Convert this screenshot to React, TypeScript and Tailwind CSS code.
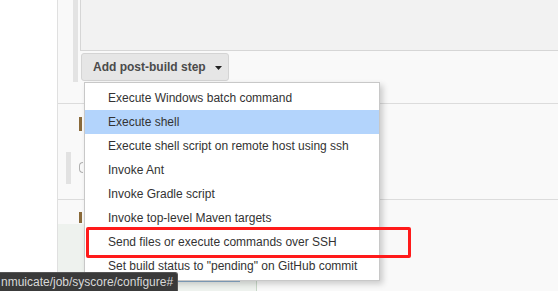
const steps = [
  "Execute Windows batch command",
  "Execute shell",
  "Execute shell script on remote host using ssh",
  "Invoke Ant",
  "Invoke Gradle script",
  "Invoke top-level Maven targets",
  "Send files or execute commands over SSH",
  'Set build status to "pending" on GitHub commit',
];

function StepMenu() {
  return (
    <div className="absolute left-[84px] top-[82px] w-[296px] border border-[#c8c8c8] bg-white pt-[3px] pb-[2px] shadow-[3px_3px_6px_rgba(0,0,0,0.18)]">
      {steps.map((s, i) => (
        <div
          key={s}
          className={
            "flex h-[24px] items-center whitespace-nowrap pl-[23px] text-[12px] text-[#333] " +
            (i === 1 ? "bg-[#b3d4fc]" : "")
          }
        >
          {s}
        </div>
      ))}
    </div>
  );
}

export default function App() {
  return (
    <div className="relative h-[291px] w-[558px] overflow-hidden bg-white font-['Liberation_Sans',Arial,sans-serif]">
      <div className="flex h-full">
        <div className="w-[58px] shrink-0 border-r border-[#e0e0e0] bg-white" />
        <div className="flex flex-1 flex-col bg-[#f9f9f9]">
          {/* post-build section */}
          <div className="flex h-[104px] border-b border-[#dcdcdc] pl-[15px]">
            <div className="h-[82px] w-[5px] bg-[#e3e3e3]" />
            <div className="ml-[2px] flex flex-1 flex-col">
              <div className="h-[51px] border-b border-l border-[#d6d6d6] bg-[#f2f2f2]" />
              <button className="mt-[2px] ml-[1px] flex h-[28px] w-[148px] items-center gap-[9px] whitespace-nowrap rounded-[3px] border border-[#d4d4d4] bg-[#e6e6e6] pl-[11px] text-[12px] font-bold text-[#4b4b4b]">
                Add post-build step
                <svg width="7" height="4" viewBox="0 0 7 4" className="mt-[1px]">
                  <path d="M0 0h7L3.5 4z" fill="#222" />
                </svg>
              </button>
            </div>
          </div>

          {/* build section behind menu */}
          <div className="relative h-[96px] border-b border-[#dcdcdc]">
            <div className="absolute left-[21px] top-[13px] h-[14px] w-[3px] bg-[#8a6a3a]" />
            <div className="absolute left-[8px] top-[48px] h-[32px] w-[5px] bg-[#e2e2e2]" />
            <div className="absolute left-[21px] top-[58px] h-[11px] w-[4px] rounded-l-full border border-r-0 border-[#b0b0b0]" />
          </div>

          <div className="relative flex-1">
            <div className="absolute left-[21px] top-[12px] h-[11px] w-[3px] bg-[#8a6a3a]" />
            <div className="absolute left-0 top-[24px] bottom-0 w-[199px] border-r border-[#c8d8c8] bg-[#eef2ee]">
              <div className="absolute left-[120px] top-[57px] h-px w-[62px] bg-[#8fb0d0]" />
            </div>
          </div>
        </div>
      </div>

      <StepMenu />

      <div className="absolute left-[86px] top-[227px] h-[31px] w-[325px] rounded-[2px] border-[3px] border-[#ff1a1a]" />

      <div className="absolute bottom-0 left-0 flex h-[19px] w-[178px] items-center overflow-hidden rounded-tr-[3px] border-t border-r border-[#555] bg-[#3a3a3a] pl-[1px]">
        <span className="whitespace-nowrap text-[12px] text-[#d8d8d8]">
          nmuicate/job/syscore/configure#
        </span>
      </div>
    </div>
  );
}
